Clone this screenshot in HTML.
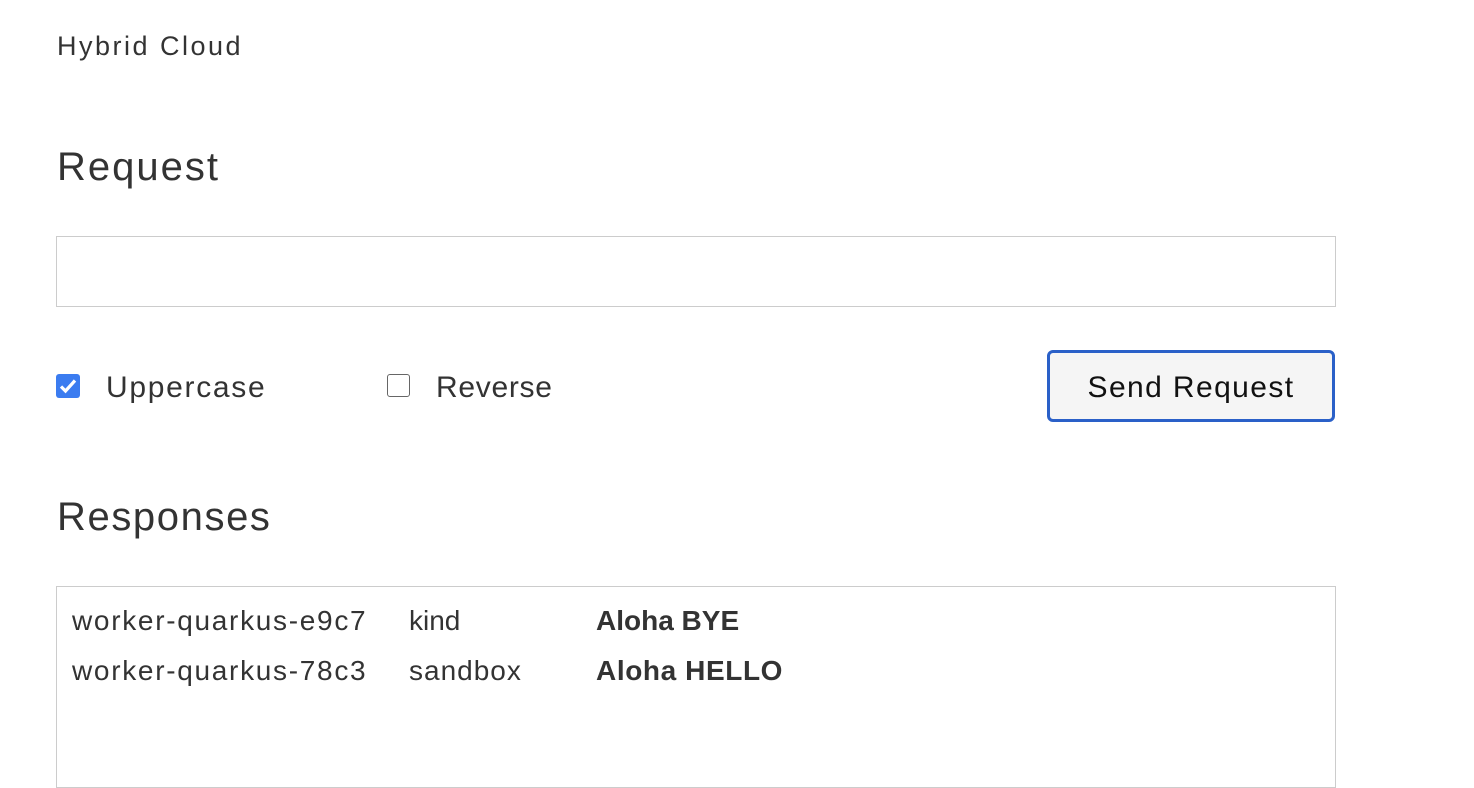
<!DOCTYPE html>
<html><head><style>
body{margin:0;width:1474px;height:762px;background:#fff;font-family:"Liberation Sans",sans-serif;color:#333;position:relative;overflow:hidden}
.a{position:absolute;white-space:nowrap}
</style></head><body>
<div class="a" style="left:57px;top:31px;font-size:27px;letter-spacing:2.5px">Hybrid Cloud</div>
<div class="a" style="left:57px;top:145px;font-size:40px;letter-spacing:2px">Request</div>
<div class="a" style="left:56px;top:236px;width:1278px;height:69px;border:1px solid #ccc"></div>
<div class="a" style="left:56px;top:374px;width:24px;height:24px;border-radius:3px;background:#3b7cf0">
<svg width="24" height="24" viewBox="0 0 24 24"><path d="M5 12.5l4.5 4.5L19 6.5" stroke="#fff" stroke-width="3.2" fill="none"/></svg></div>
<div class="a" style="left:106px;top:371px;font-size:30px;font-weight:300;letter-spacing:1.7px">Uppercase</div>
<div class="a" style="left:387px;top:374px;width:21px;height:21px;border:1.5px solid #666;border-radius:3px"></div>
<div class="a" style="left:436px;top:371px;font-size:30px;font-weight:300;letter-spacing:0.7px">Reverse</div>
<div class="a" style="left:1047px;top:350px;width:282px;height:66px;border:3px solid #2a60c8;border-radius:6px;background:#f5f5f5;font-size:30px;color:#111;text-align:center;line-height:70px;letter-spacing:1.4px">Send Request</div>
<div class="a" style="left:57px;top:495px;font-size:40px;letter-spacing:1.6px">Responses</div>
<div class="a" style="left:56px;top:586px;width:1278px;height:200px;border:1px solid #ccc"></div>
<div class="a" style="left:72px;top:605px;font-size:28px;font-weight:300;letter-spacing:1.7px">worker-quarkus-e9c7</div>
<div class="a" style="left:409px;top:605px;font-size:28px;font-weight:300">kind</div>
<div class="a" style="left:596px;top:605px;font-size:28px;font-weight:bold">Aloha BYE</div>
<div class="a" style="left:72px;top:655px;font-size:28px;font-weight:300;letter-spacing:1.7px">worker-quarkus-78c3</div>
<div class="a" style="left:409px;top:655px;font-size:28px;font-weight:300;letter-spacing:1px">sandbox</div>
<div class="a" style="left:596px;top:655px;font-size:28px;font-weight:bold;letter-spacing:0.6px">Aloha HELLO</div>
</body></html>
